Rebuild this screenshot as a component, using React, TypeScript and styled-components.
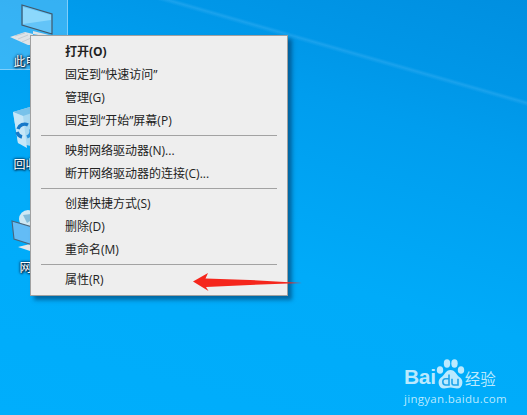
import React from "react";
import styled, { createGlobalStyle } from "styled-components";

const Global = createGlobalStyle`
  html, body { margin: 0; padding: 0; }
  #root { width: 527px; height: 415px; overflow: hidden; }
`;

const Desktop = styled.div`
  position: relative;
  width: 527px;
  height: 415px;
  overflow: hidden;
  font-family: "Open Sans", "Noto Sans CJK SC", sans-serif;
  background:
    linear-gradient(16deg, rgba(130, 205, 255, 0) 81.2%, rgba(130, 205, 255, 0.2) 81.8%, rgba(130, 205, 255, 0) 82.3%),
    linear-gradient(16deg, #00aefc 0%, #00abf9 40%, #009dee 72%, #0097e8 82%, #008fe0 100%);
`;

const IconColumn = styled.div`
  display: grid;
  grid-template-rows: 103px 103px 72px;
  width: 68px;
`;

const DesktopIcon = styled.div<{ $selected?: boolean }>`
  box-sizing: border-box;
  width: 68px;
  height: 70px;
  padding: 0 4px 1px 0;
  display: flex;
  flex-direction: column;
  align-items: center;
  justify-content: flex-end;
  background: ${(p) => (p.$selected ? "rgba(150, 215, 255, 0.36)" : "transparent")};
  border-right: 1px solid ${(p) => (p.$selected ? "rgba(190, 230, 255, 0.55)" : "transparent")};
  border-bottom: 1px solid ${(p) => (p.$selected ? "rgba(190, 230, 255, 0.55)" : "transparent")};
`;

const IconLabel = styled.div`
  color: #fff;
  font-size: 12px;
  line-height: 16px;
  margin: 2px 0 -2px;
  white-space: nowrap;
  text-shadow: 0 0 2px #002040, 1px 1px 2px #001830, 0 0 3px #001830;
`;

const Menu = styled.div`
  position: absolute;
  left: 30px;
  top: 35px;
  box-sizing: border-box;
  width: 258px;
  height: 261px;
  padding: 4px 2px 2px;
  background: #eeeeee;
  border: 1px solid #a0a0a0;
  box-shadow: 4px 4px 4px rgba(0, 40, 80, 0.5);
  display: flex;
  flex-direction: column;
`;

const Item = styled.div<{ $bold?: boolean }>`
  height: 23px;
  flex: none;
  padding-left: 32px;
  font-size: 12px;
  line-height: 23px;
  color: #222;
  white-space: nowrap;
  font-weight: ${(p) => (p.$bold ? 700 : 400)};
`;

const Separator = styled.div`
  height: 1px;
  flex: none;
  margin: 3px 8px;
  background: #a2a2a2;
`;

const Group = styled.div`
  display: flex;
  flex-direction: column;
`;

const Arrow = styled.svg`
  position: absolute;
  left: 190px;
  top: 270px;
`;

const Watermark = styled.div`
  position: absolute;
  left: 404px;
  top: 359px;
  width: 96px;
  color: rgba(220, 245, 255, 0.85);
  display: flex;
  flex-direction: column;
`;

const BrandRow = styled.div`
  display: flex;
  align-items: flex-end;
  height: 30px;
`;

const BrandLatin = styled.span`
  font-family: "Liberation Sans", sans-serif;
  font-weight: 700;
  font-size: 21px;
  line-height: 24px;
  letter-spacing: -0.3px;
`;

const BrandCjk = styled.span`
  font-family: "Noto Sans CJK SC", sans-serif;
  font-size: 15.5px;
  line-height: 22px;
`;

const Domain = styled.div`
  font-family: "Open Sans", sans-serif;
  font-size: 11.5px;
  line-height: 14px;
  letter-spacing: 0.3px;
  margin-top: 3px;
  white-space: nowrap;
`;

const LogoSvg = styled.svg`
  flex: none;
`;

const groups = [
  [["打开(O)", true], ["固定到“快速访问”"], ["管理(G)"], ["固定到“开始”屏幕(P)"]],
  [["映射网络驱动器(N)..."], ["断开网络驱动器的连接(C)..."]],
  [["创建快捷方式(S)"], ["删除(D)"], ["重命名(M)"]],
  [["属性(R)"]],
] as [string, boolean?][][];

const PcIcon = () => (
  <svg width="46" height="48" viewBox="0 0 46 48">
    <path d="M1 33 L16 28 L24 30 L24 41 L19 41 Z" fill="#dfe4e8" />
    <path d="M6 32 L16 29 M9 35 L19 31 M13 38 L22 34" stroke="#b9c1c8" strokeWidth="0.7" />
    <path d="M24 27 L40 31 L40 33 L24 30 Z" fill="#dfe3e6" />
    <path d="M13 1 L43 10 L43 30 L13 21 Z" fill="#63c4f8" stroke="#42586a" strokeWidth="1.2" />
    <path d="M14 3 L42 11 L42 16 L14 20 Z" fill="#8cd8fc" />
  </svg>
);

const BinIcon = () => (
  <svg width="46" height="48" viewBox="0 0 46 48">
    <path d="M4 5 L21 0 L32 3 L30 41 L9 36 Z" fill="#a8d9f2" />
    <path d="M4 5 L21 0 L32 3 L14 9 Z" fill="#78c2ea" />
    <path d="M4 5 L14 9 L18 41 L9 36 Z" fill="#c6e7f8" />
    <path d="M9 22 a7 7 0 0 1 10 -4" fill="none" stroke="#1679c9" strokeWidth="3.4" />
    <path d="M22 22 a7 7 0 0 1 -4 8" fill="none" stroke="#2b95dd" strokeWidth="3.4" />
    <path d="M13 30 a7 7 0 0 1 -5 -5" fill="none" stroke="#1679c9" strokeWidth="3.4" />
  </svg>
);

const NetIcon = () => (
  <svg width="46" height="48" viewBox="0 0 46 48">
    <circle cx="19" cy="9" r="9" fill="#cfe8f4" />
    <path d="M14 5 L22 4 L24 9 L18 13 Z" fill="#84bddb" />
    <path d="M9 37 L21 34 L30 36 L30 42 L21 41 Z" fill="#e3e7ea" />
    <path d="M3 11 L30 19 L30 37 L5 29 Z" fill="#63bcf6" stroke="#49657c" strokeWidth="1.1" />
  </svg>
);

const LogoMark = () => (
  <LogoSvg width="29" height="30" viewBox="0 0 29 30">
    <g fill="currentColor">
      <ellipse cx="4" cy="11" rx="3.2" ry="3.8" />
      <ellipse cx="11" cy="4.5" rx="3.2" ry="4.2" />
      <ellipse cx="18.5" cy="4.5" rx="3.2" ry="4.2" />
      <ellipse cx="25" cy="11" rx="3.2" ry="3.8" />
      <path d="M14.5 11 C9.5 11 9 16 5 18.5 C1 21 2 29.5 8 29.5 C10.5 29.5 12 28.5 14.5 28.5 C17 28.5 18.5 29.5 21 29.5 C27 29.5 28 21 24 18.5 C20 16 19.5 11 14.5 11 Z" />
    </g>
    <path d="M13 15.5 V26 H9.6 C7.6 26 6.8 24.4 6.8 22.8 C6.8 21.2 7.8 19.8 9.6 19.8 H13 M16 19.8 V24 C16 25.3 16.8 26 17.9 26 H22 V19.8" fill="none" stroke="#1fa4ea" strokeWidth="1.6" />
  </LogoSvg>
);

export default function App() {
  return (
    <Desktop>
      <Global />
      <IconColumn>
        <DesktopIcon $selected>
          <PcIcon />
          <IconLabel>此电脑</IconLabel>
        </DesktopIcon>
        <DesktopIcon>
          <BinIcon />
          <IconLabel>回收站</IconLabel>
        </DesktopIcon>
        <DesktopIcon>
          <NetIcon />
          <IconLabel>网络</IconLabel>
        </DesktopIcon>
      </IconColumn>
      <Menu>
        {groups.map((g, i) => (
          <React.Fragment key={i}>
            {i > 0 && <Separator />}
            <Group>
              {g.map(([label, bold]) => (
                <Item key={label} $bold={bold}>{label}</Item>
              ))}
            </Group>
          </React.Fragment>
        ))}
      </Menu>
      <Arrow width="114" height="22" viewBox="0 0 114 22">
        <path d="M3 11.5 L18 3 L15.5 8.5 L60 10 L112 13 L60 15 L16 17 L18.5 21 Z" fill="#f5261c" />
      </Arrow>
      <Watermark>
        <BrandRow>
          <BrandLatin>Bai</BrandLatin>
          <LogoMark />
          <BrandCjk>经验</BrandCjk>
        </BrandRow>
        <Domain>jingyan.baidu.com</Domain>
      </Watermark>
    </Desktop>
  );
}
